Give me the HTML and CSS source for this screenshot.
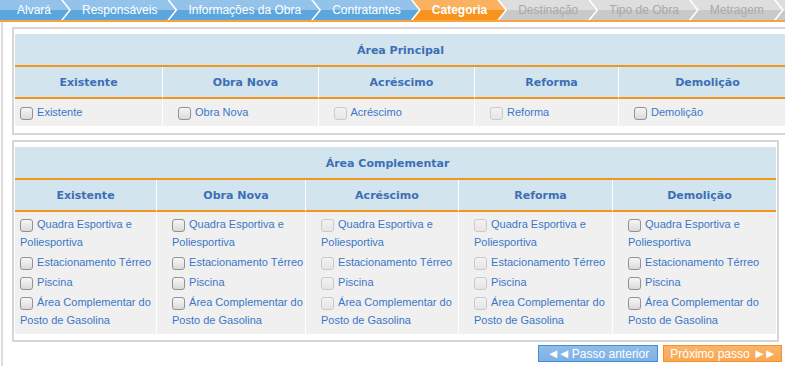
FILE: index.html
```html
<!DOCTYPE html>
<html lang="pt-BR">
<head>
    <meta charset="UTF-8">
    <meta name="viewport" content="width=device-width, initial-scale=1.0">
    <title>Categoria</title>
    <link rel="stylesheet" href="styles.css">
</head>
<body>
    <ul class="steps">
        <li class="step done first">Alvará</li>
        <li class="step done">Responsáveis</li>
        <li class="step done">Informações da Obra</li>
        <li class="step done">Contratantes</li>
        <li class="step current">Categoria</li>
        <li class="step">Destinação</li>
        <li class="step">Tipo de Obra</li>
        <li class="step">Metragem</li>
        <li class="step step-more"></li>
    </ul>

    <div class="page">
        <div class="panel">
            <table class="area area-main">
                <colgroup>
                    <col style="width: 147px">
                    <col style="width: 156px">
                    <col style="width: 156px">
                    <col style="width: 144px">
                    <col style="width: 168px">
                </colgroup>
                <thead>
                    <tr><th colspan="5" class="area-title">Área Principal</th></tr>
                    <tr class="col-heads">
                        <th>Existente</th>
                        <th>Obra Nova</th>
                        <th>Acréscimo</th>
                        <th>Reforma</th>
                        <th>Demolição</th>
                    </tr>
                </thead>
                <tbody>
                    <tr>
                        <td><label class="opt"><input type="checkbox"> Existente</label></td>
                        <td><label class="opt"><input type="checkbox"> Obra Nova</label></td>
                        <td><label class="opt"><input type="checkbox" disabled> Acréscimo</label></td>
                        <td><label class="opt"><input type="checkbox" disabled> Reforma</label></td>
                        <td><label class="opt"><input type="checkbox"> Demolição</label></td>
                    </tr>
                </tbody>
            </table>
        </div>

        <div class="panel panel-extra">
            <table class="area area-extra">
                <colgroup>
                    <col style="width: 141px">
                    <col style="width: 149px">
                    <col style="width: 153px">
                    <col style="width: 154px">
                    <col style="width: 164px">
                </colgroup>
                <thead>
                    <tr><th colspan="5" class="area-title">Área Complementar</th></tr>
                    <tr class="col-heads">
                        <th>Existente</th>
                        <th>Obra Nova</th>
                        <th>Acréscimo</th>
                        <th>Reforma</th>
                        <th>Demolição</th>
                    </tr>
                </thead>
                <tbody>
                    <tr>
                        <td>
                            <label class="opt"><input type="checkbox"> Quadra Esportiva e Poliesportiva</label>
                            <label class="opt"><input type="checkbox"> Estacionamento Térreo</label>
                            <label class="opt"><input type="checkbox"> Piscina</label>
                            <label class="opt"><input type="checkbox"> Área Complementar do Posto de Gasolina</label>
                        </td>
                        <td>
                            <label class="opt"><input type="checkbox"> Quadra Esportiva e Poliesportiva</label>
                            <label class="opt"><input type="checkbox"> Estacionamento Térreo</label>
                            <label class="opt"><input type="checkbox"> Piscina</label>
                            <label class="opt"><input type="checkbox"> Área Complementar do Posto de Gasolina</label>
                        </td>
                        <td>
                            <label class="opt"><input type="checkbox" disabled> Quadra Esportiva e Poliesportiva</label>
                            <label class="opt"><input type="checkbox" disabled> Estacionamento Térreo</label>
                            <label class="opt"><input type="checkbox" disabled> Piscina</label>
                            <label class="opt"><input type="checkbox" disabled> Área Complementar do Posto de Gasolina</label>
                        </td>
                        <td>
                            <label class="opt"><input type="checkbox" disabled> Quadra Esportiva e Poliesportiva</label>
                            <label class="opt"><input type="checkbox" disabled> Estacionamento Térreo</label>
                            <label class="opt"><input type="checkbox" disabled> Piscina</label>
                            <label class="opt"><input type="checkbox" disabled> Área Complementar do Posto de Gasolina</label>
                        </td>
                        <td>
                            <label class="opt"><input type="checkbox"> Quadra Esportiva e Poliesportiva</label>
                            <label class="opt"><input type="checkbox"> Estacionamento Térreo</label>
                            <label class="opt"><input type="checkbox"> Piscina</label>
                            <label class="opt"><input type="checkbox"> Área Complementar do Posto de Gasolina</label>
                        </td>
                    </tr>
                </tbody>
            </table>
        </div>

        <div class="actions">
            <button class="btn btn-prev"><span class="arr">◄◄</span> Passo anterior</button>
            <button class="btn btn-next">Próximo passo <span class="arr">►►</span></button>
        </div>
    </div>
</body>
</html>
```

FILE: styles.css
```css
body {
    margin: 0;
    background: #fff;
    font-family: "Liberation Sans", Arial, sans-serif;
    font-size: 11px;
}

/* wizard steps */
.steps {
    display: flex;
    margin: 0;
    padding: 0;
    list-style: none;
    height: 20px;
    overflow: hidden;
    white-space: nowrap;
    border-bottom: 2px solid #f6a443;
    background: #fff;
}
.step {
    flex: none;
    height: 20px;
    line-height: 20px;
    padding: 0 18px 0 19px;
    margin-left: -6px;
    font-size: 12px;
    color: #a9a9a9;
    background: linear-gradient(#dedede 50%, #c9c9c9 50%);
    clip-path: polygon(0 0, calc(100% - 8px) 0, 100% 50%, calc(100% - 8px) 100%, 0 100%, 8px 50%);
}
.step.first {
    margin-left: 0;
    padding-left: 17px;
    clip-path: polygon(0 0, calc(100% - 8px) 0, 100% 50%, calc(100% - 8px) 100%, 0 100%);
}
.step.done {
    color: #fff;
    background: linear-gradient(#93c3ea 50%, #5ba7dd 50%);
}
.step.current {
    color: #fff;
    font-weight: bold;
    background: linear-gradient(#fbb260 50%, #f7941e 50%);
}
.step-more {
    width: 60px;
}

/* content */
.page {
    margin-left: 1px;
    border-left: 2px solid #dcdcdc;
    padding: 5px 3px 0 0;
    overflow: hidden;
    height: 344px;
}
.panel {
    width: fit-content;
    margin-left: 9px;
    padding: 5px 1px 7px 1px;
    border: 2px solid #d6d6d6;
}
.panel-extra {
    margin-top: 5px;
    padding-bottom: 6px;
}

.area {
    border-collapse: separate;
    border-spacing: 0;
    table-layout: fixed;
}
.area-main {
    width: 771px;
}
.area-extra {
    width: 761px;
}
.area th {
    padding: 0;
    font-family: "DejaVu Sans", Verdana, sans-serif;
    font-size: 11px;
    font-weight: bold;
    color: #3d6fb5;
    background: #d2e4ee;
    border-bottom: 2px solid #f0961f;
}
.area-title {
    height: 29px;
}
.area th.area-title {
    padding-top: 2px;
}
.area-extra th.area-title {
    padding-right: 16px;
}
.col-heads th {
    height: 30px;
}
.col-heads th + th {
    padding-left: 10px;
    border-left: 1px solid #fff;
}
.area td {
    vertical-align: top;
    padding: 4px 0 5px 5px;
    background: #f0f0f0;
}
.area-extra td {
    padding: 3px 0 5px 5px;
}
.area td + td {
    padding-left: 15px;
    border-left: 1px solid #fff;
}

.opt {
    display: block;
    line-height: 18px;
    color: #3b77c6;
}
.opt + .opt {
    margin-top: 2px;
}
.opt input {
    appearance: none;
    -webkit-appearance: none;
    box-sizing: border-box;
    width: 13px;
    height: 13px;
    margin: 0 1px 0 0;
    vertical-align: -4px;
    border: 1px solid #929292;
    border-radius: 3px;
    background: linear-gradient(#f6f6f6, #dadada);
}
.opt input:disabled {
    border-color: #cacaca;
    background: linear-gradient(#f2f2f2, #e6e6e6);
}

/* navigation buttons */
.actions {
    display: flex;
    justify-content: flex-end;
    gap: 5px;
    margin-top: 3px;
}
.btn {
    box-sizing: border-box;
    width: 120px;
    height: 17px;
    padding: 0;
    font-family: "Liberation Sans", Arial, sans-serif;
    font-size: 12px;
    line-height: 15px;
    color: #fff;
    border: 1px solid;
    cursor: pointer;
}
.btn .arr {
    font-size: 13px;
    letter-spacing: -2px;
}
.btn-prev {
    background: linear-gradient(#8fbdea, #7fb1e4);
    border-color: #3f8fd7;
}
.btn-next {
    width: 119px;
    background: linear-gradient(#fab368, #f8a854);
    border-color: #f4922a;
}
```
